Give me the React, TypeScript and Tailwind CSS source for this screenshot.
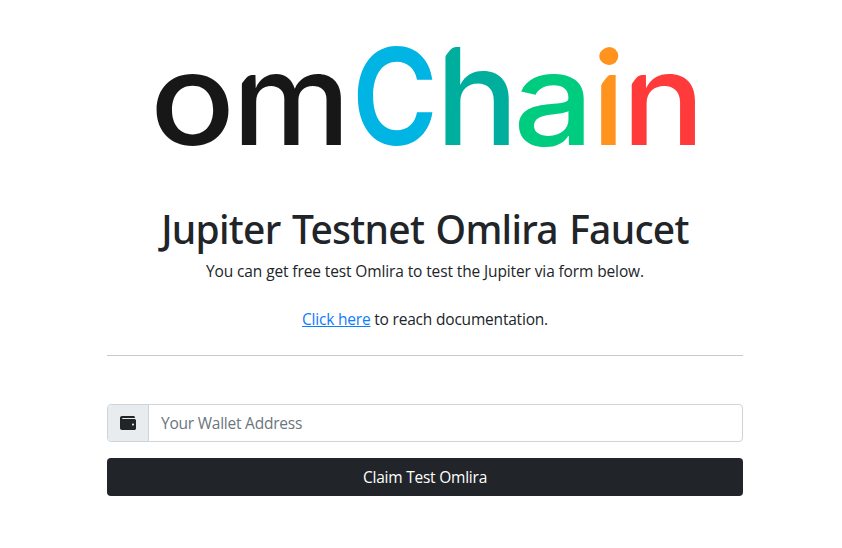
import { FaWallet } from "react-icons/fa";

type Letter = { char: string; x: number; scaleX: number; scaleY: number; className: string };

const letters: Letter[] = [
  { char: "o", x: 150, scaleX: 1.1, scaleY: 1, className: "fill-[#171717] font-medium" },
  { char: "m", x: 232.3, scaleX: 1.04, scaleY: 1, className: "fill-[#171717] font-medium" },
  { char: "C", x: 352, scaleX: 0.91, scaleY: 1.05, className: "fill-[#00b4e4] font-semibold" },
  { char: "h", x: 435.5, scaleX: 1.08, scaleY: 1.05, className: "fill-[#00ae9d] font-medium" },
  { char: "a", x: 513.3, scaleX: 1.11, scaleY: 1, className: "fill-[#00cc80] font-medium" },
  { char: "i", x: 591.6, scaleX: 1.05, scaleY: 1, className: "fill-[#ff931e] font-medium" },
  { char: "n", x: 621.8, scaleX: 1.08, scaleY: 1, className: "fill-[#ff3a3a] font-medium" },
];

function Logo() {
  return (
    <svg viewBox="107 0 636 205" className="block h-[205px] w-full" role="img" aria-label="omChain">
      {letters.map((l) => (
        <text
          key={l.char}
          transform={`translate(${l.x} 144.5) scale(${l.scaleX} ${l.scaleY})`}
          className={`font-['Inter',sans-serif] text-[128px] ${l.className}`}
        >
          {l.char}
        </text>
      ))}
      <circle cx="609.3" cy="56" r="9" className="fill-[#ff931e]" />
      {/* bevelled upper-left corners of the stems */}
      <g className="fill-white">
        <path d="M239 72H252V75C248 75 245 79 241 85H239Z" />
        <path d="M443 44H456V47C452 47 449 51 445 57H443Z" />
        <path d="M599 72H612V74C608 75 605 79 601.3 85H599Z" />
        <path d="M629 72H642V75C638 75 635 79 631.4 85H629Z" />
      </g>
    </svg>
  );
}

export default function App() {
  return (
    <main className="min-h-screen bg-white pl-[107px] font-['Open_Sans',sans-serif] text-[15.5px] leading-6 tracking-[-0.12px] text-[#212529]">
      <div className="w-[636px]">
        <Logo />
        <h1 className="mb-1.5 text-center font-['Noto_Sans',sans-serif] text-[39px] leading-[48px] font-medium tracking-[-0.72px] [word-spacing:2px] whitespace-nowrap">
          Jupiter Testnet Omlira Faucet
        </h1>
        <p className="mb-6 text-center">You can get free test Omlira to test the Jupiter via form below.</p>
        <p className="text-center tracking-[-0.2px]">
          <a href="#" className="text-[#0d7dfd] underline">Click here</a> to reach documentation.
        </p>
        <hr className="mt-6 mb-12 border-t border-[#c8c9ca]" />
        <form>
          <div className="flex h-[38px] overflow-hidden rounded border border-[#ced4da]">
            <span className="flex w-[41px] shrink-0 items-center justify-center border-r border-[#ced4da] bg-[#e9ecef]">
              <FaWallet className="size-4" />
            </span>
            <input
              type="text"
              placeholder="Your Wallet Address"
              className="min-w-0 flex-1 px-3 tracking-[-0.23px] outline-none placeholder:text-[#6c757d]"
            />
          </div>
          <button type="button" className="mt-4 block h-[38px] w-full rounded bg-[#212529] tracking-[-0.23px] text-white">
            Claim Test Omlira
          </button>
        </form>
      </div>
    </main>
  );
}
